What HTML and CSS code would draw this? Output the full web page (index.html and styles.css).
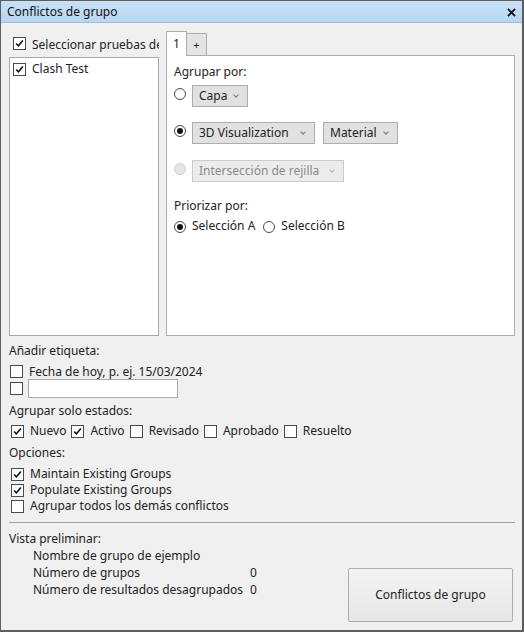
FILE: index.html
```html
<!DOCTYPE html>
<html lang="es">
<head>
<meta charset="utf-8">
<title>Conflictos de grupo</title>
<link rel="stylesheet" href="styles.css">
</head>
<body>
<div class="window">
  <div class="titlebar">
    <span class="title">Conflictos de grupo</span>
    <svg class="close" width="10" height="10" viewBox="0 0 10 10"><path d="M1 1 L9 9 M9 1 L1 9" stroke="#111" stroke-width="2" fill="none"/></svg>
  </div>
  <div class="content">
    <div class="main">
      <div class="leftcol">
        <div class="lefthead">
          <span class="cb checked"><svg viewBox="0 0 13 13"><path d="M2.5 6.5 L5.2 9.3 L10.5 3" stroke="#111" stroke-width="1.9" fill="none"/></svg></span>
          <span class="cblabel nowrap">Seleccionar pruebas de</span>
        </div>
        <div class="list">
          <div class="row">
            <span class="cb checked"><svg viewBox="0 0 13 13"><path d="M2.5 6.5 L5.2 9.3 L10.5 3" stroke="#111" stroke-width="1.9" fill="none"/></svg></span>
            <span class="cblabel">Clash Test</span>
          </div>
        </div>
      </div>
      <div class="rightcol">
        <div class="tabs">
          <div class="tab active">1</div>
          <div class="tab plus">+</div>
        </div>
        <div class="panel">
          <div class="label">Agrupar por:</div>
          <div class="optrow r1">
            <span class="radio"></span>
            <div class="select w-capa">Capa<span class="chev"></span></div>
          </div>
          <div class="optrow r2">
            <span class="radio on"></span>
            <div class="select w-3d">3D Visualization<span class="chev"></span></div>
            <div class="select w-mat">Material<span class="chev"></span></div>
          </div>
          <div class="optrow r3">
            <span class="radio disabled"></span>
            <div class="select disabled w-int">Intersección de rejilla<span class="chev"></span></div>
          </div>
          <div class="label prio">Priorizar por:</div>
          <div class="radiorow">
            <span class="radio on"></span><span class="rlabel">Selección A</span>
            <span class="radio"></span><span class="rlabel">Selección B</span>
          </div>
        </div>
      </div>
    </div>

    <div class="label sec1">Añadir etiqueta:</div>
    <div class="row cbrow first">
      <span class="cb"></span><span class="cblabel">Fecha de hoy, p. ej. 15/03/2024</span>
    </div>
    <div class="row cbrow second">
      <span class="cb"></span><span class="textbox"></span>
    </div>

    <div class="label sec2">Agrupar solo estados:</div>
    <div class="states">
      <div class="row"><span class="cb checked"><svg viewBox="0 0 13 13"><path d="M2.5 6.5 L5.2 9.3 L10.5 3" stroke="#111" stroke-width="1.9" fill="none"/></svg></span><span class="cblabel">Nuevo</span></div>
      <div class="row"><span class="cb checked"><svg viewBox="0 0 13 13"><path d="M2.5 6.5 L5.2 9.3 L10.5 3" stroke="#111" stroke-width="1.9" fill="none"/></svg></span><span class="cblabel">Activo</span></div>
      <div class="row"><span class="cb"></span><span class="cblabel">Revisado</span></div>
      <div class="row"><span class="cb"></span><span class="cblabel">Aprobado</span></div>
      <div class="row"><span class="cb"></span><span class="cblabel">Resuelto</span></div>
    </div>

    <div class="label sec3">Opciones:</div>
    <div class="options">
      <div class="row"><span class="cb checked"><svg viewBox="0 0 13 13"><path d="M2.5 6.5 L5.2 9.3 L10.5 3" stroke="#111" stroke-width="1.9" fill="none"/></svg></span><span class="cblabel">Maintain Existing Groups</span></div>
      <div class="row"><span class="cb checked"><svg viewBox="0 0 13 13"><path d="M2.5 6.5 L5.2 9.3 L10.5 3" stroke="#111" stroke-width="1.9" fill="none"/></svg></span><span class="cblabel">Populate Existing Groups</span></div>
      <div class="row"><span class="cb"></span><span class="cblabel">Agrupar todos los demás conflictos</span></div>
    </div>

    <div class="sep"></div>

    <div class="bottom">
      <div class="preview">
        <div class="label">Vista preliminar:</div>
        <div class="prow"><span class="pk">Nombre de grupo de ejemplo</span><span class="pv"></span></div>
        <div class="prow"><span class="pk">Número de grupos</span><span class="pv">0</span></div>
        <div class="prow"><span class="pk">Número de resultados desagrupados</span><span class="pv">0</span></div>
      </div>
      <div class="button">Conflictos de grupo</div>
    </div>
  </div>
</div>
</body>
</html>
```

FILE: styles.css
```css
* { box-sizing: border-box; }
html, body { margin: 0; padding: 0; background: #f0f0f0; }
body {
  font-family: "Noto Sans", "Open Sans", sans-serif;
  font-size: 12px;
  line-height: 16px;
  color: #222;
}
.window {
  width: 524px;
  height: 632px;
  border-style: solid;
  border-color: #5e5e5e;
  border-width: 1px 2px 2px 1px;
  background: #f0f0f0;
  display: flex;
  flex-direction: column;
  overflow: hidden;
}
.titlebar {
  height: 22px;
  flex: none;
  background: linear-gradient(#c6e0f6, #b9d6f0);
  border-bottom: 1px solid #a7b9c9;
  display: flex;
  align-items: center;
  justify-content: space-between;
  padding: 0 6px 0 6px;
}
.title { color: #111; }
.close { display: block; margin-top: 1px; width: 9px; height: 9px; }
.content {
  padding: 8px 7px 8px 8px;
  display: flex;
  flex-direction: column;
  flex: 1;
}
.main { display: flex; gap: 7px; }
.leftcol { width: 150px; display: flex; flex-direction: column; }
.lefthead {
  height: 26px;
  padding: 6px 0 0 4px;
  display: flex;
  align-items: flex-start;
  overflow: hidden;
  width: 150px;
}
.nowrap { white-space: nowrap; }
.list {
  height: 279px;
  background: #fff;
  border: 1px solid #a8a8a8;
  padding: 3px 3px;
}
.row { display: flex; align-items: center; }
.cb {
  width: 13px;
  height: 13px;
  flex: none;
  border: 1px solid #4a4a4a;
  background: #fff;
  display: inline-block;
}
.cb svg { display: block; width: 11px; height: 11px; }
.cblabel { margin-left: 6px; line-height: 16px; }
.rightcol { width: 350px; display: flex; flex-direction: column; }
.tabs { height: 24px; display: flex; align-items: flex-end; }
.tab {
  border: 1px solid #adadad;
  border-bottom: none;
  display: flex;
  justify-content: center;
}
.tab.active {
  width: 21px;
  height: 25px;
  margin-bottom: -1px;
  background: #fff;
  position: relative;
  z-index: 1;
  padding-top: 4px;
  font-size: 12px;
}
.tab.plus {
  width: 21px;
  height: 22px;
  margin-left: -1px;
  background: #e4e4e4;
  padding-top: 3px;
  font-size: 11px;
}
.panel {
  height: 281px;
  background: #fff;
  border: 1px solid #adadad;
  padding: 8px 8px 0 7px;
}
.optrow { display: flex; align-items: flex-start; gap: 6px; }
.optrow.r1 { margin-top: 5px; }
.optrow.r2 { margin-top: 15px; }
.optrow.r3 { margin-top: 16px; }
.optrow .select + .select { margin-left: 2px; }
.radio {
  width: 12px;
  height: 12px;
  flex: none;
  border-radius: 50%;
  border: 1px solid #4a4a4a;
  background: #fff;
  margin-top: 3px;
  display: inline-flex;
  align-items: center;
  justify-content: center;
}
.radio.on::after {
  content: "";
  width: 6px;
  height: 6px;
  border-radius: 50%;
  background: #111;
}
.radio.disabled { border-color: #cfcfcf; background: #e6e6e6; }
.select {
  height: 22px;
  border: 1px solid #adadad;
  background: #e1e1e1;
  display: flex;
  align-items: center;
  padding: 0 0 0 6px;
  justify-content: space-between;
}
.select .chev {
  width: 4px;
  height: 4px;
  border-right: 1px solid #777;
  border-bottom: 1px solid #777;
  transform: rotate(45deg);
  margin: 0 9px 3px 0;
}
.select.disabled { background: #ececec; border-color: #cccccc; color: #8a8a8a; }
.select.disabled .chev { border-color: #b0b0b0; }
.w-capa { width: 56px; }
.w-3d { width: 123px; }
.w-mat { width: 75px; }
.w-int { width: 152px; }
.label.prio { margin-top: 16px; }
.radiorow { display: flex; align-items: center; margin-top: 4px; }
.radiorow .radio { margin-top: 1px; }
.rlabel { margin-left: 6px; margin-right: 8px; }
.sec1 { margin-top: 7px; }
.cbrow { padding-left: 1px; }
.cbrow.first { margin-top: 5px; height: 15px; }
.cbrow.second { height: 19px; }
.textbox {
  width: 150px;
  height: 19px;
  margin-left: 5px;
  background: #fff;
  border: 1px solid #a8a8a8;
}
.sec2 { margin-top: 5px; }
.states { display: flex; gap: 5px; margin-top: 4px; padding-left: 2px; }
.states .cblabel { margin-left: 6px; }
.sec3 { margin-top: 6px; }
.options { margin-top: 5px; padding-left: 2px; }
.sep { height: 1px; background: #a0a0a0; margin-top: 8px; }
.bottom { display: flex; justify-content: space-between; margin-top: 8px; }
.preview { display: flex; flex-direction: column; gap: 1px; }
.prow { display: flex; padding-left: 24px; }
.pk { width: 217px; }
.button {
  width: 165px;
  height: 54px;
  margin-top: 37px;
  margin-right: 2px;
  border: 1px solid #adadad;
  border-radius: 2px;
  background: linear-gradient(#f4f4f4, #e6e6e6);
  display: flex;
  align-items: center;
  justify-content: center;
}
```
